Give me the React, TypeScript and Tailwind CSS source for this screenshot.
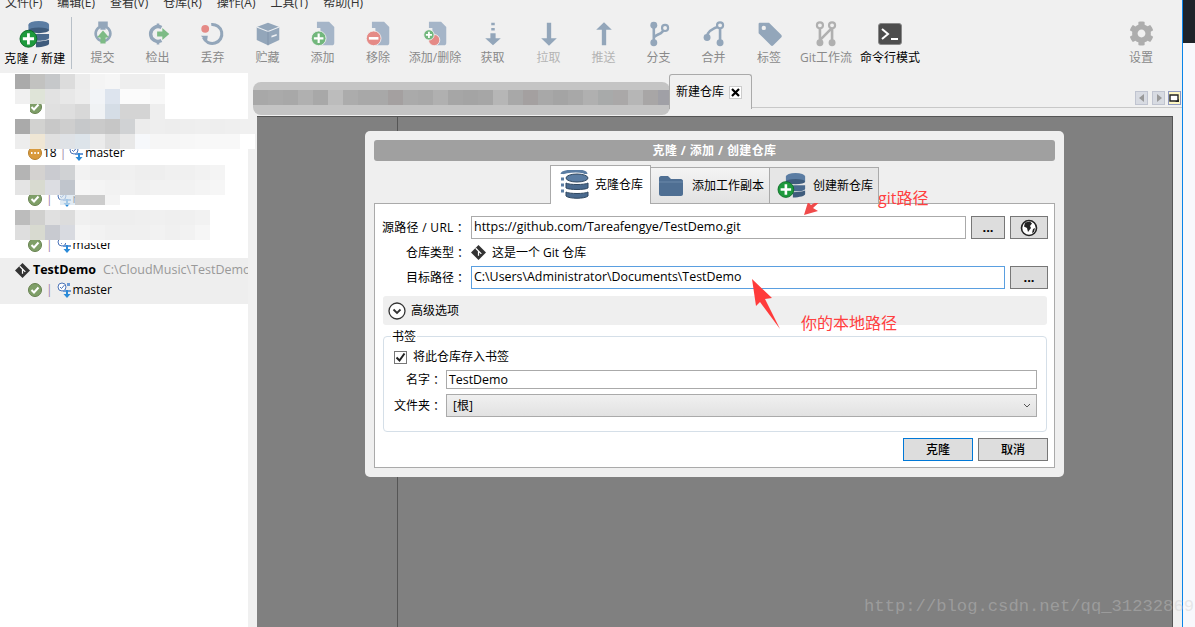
import React from 'react'
import { FaCog } from 'react-icons/fa'

const cjk = { fontFamily: '"Open Sans", "Noto Sans CJK SC", sans-serif' }

const menus = ['文件(F)', '编辑(E)', '查看(V)', '仓库(R)', '操作(A)', '工具(T)', '帮助(H)']

const slate = '#93a6ba'

function Db({ plus, small }: { plus?: boolean; small?: boolean }) {
  return (
    <svg width={small ? 30 : 32} height={small ? 28 : 30} viewBox="0 0 34 32">
      <ellipse cx="21" cy="5" rx="11" ry="4" fill="#5b7da3" />
      <rect x="10" y="5" width="22" height="6" fill="#5b7da3" />
      <ellipse cx="21" cy="11" rx="11" ry="3" fill="#3f5c7c" />
      <path d="M18 15h14v4c0 2-5 3-9 3h-5z" fill="#4a6a8e" />
      <path d="M18 23c5 0 11-1 14-2v4c0 2-6 4-14 4z" fill="#3f5c7c" />
      {plus ? (
        <>
          <circle cx="10" cy="20" r="9" fill="#1d9a3c" stroke="#0c6a26" />
          <path d="M10 14v12M4 20h12" stroke="#fff" strokeWidth="3" />
        </>
      ) : null}
    </svg>
  )
}

function CloneDb() {
  return (
    <svg width="30" height="30" viewBox="0 0 30 30">
      <path d="M2 4c0-2 8-3 14-3s10 1 10 3" fill="none" stroke="#5b7da3" strokeWidth="3" />
      <path d="M1 9h3M1 15h3M1 21h3" stroke="#5b7da3" strokeWidth="3" />
      <ellipse cx="17" cy="8" rx="11" ry="4" fill="#5b7da3" stroke="#2f4760" />
      <path d="M6 13c3 2 19 2 22 0v5c-3 2-19 2-22 0z" fill="#4a6a8e" stroke="#2f4760" />
      <path d="M6 22c3 2 19 2 22 0v4c-3 3-19 3-22 0z" fill="#4a6a8e" stroke="#2f4760" />
    </svg>
  )
}

const iconProps = { width: 26, height: 26, viewBox: '0 0 30 30' }

function CommitIcon() {
  return (
    <svg {...iconProps}>
      <path d="M11 2v5a8.5 8.5 0 1 0 8 0V2h-2.5v6.500h-3V2z" fill="none" stroke={slate} strokeWidth="3" />
      <path d="M15 11l7 8h-4v7h-6v-7H8z" fill="#7dbb85" />
    </svg>
  )
}
function CheckoutIcon() {
  return (
    <svg {...iconProps}>
      <path d="M19 7.500A8.500 8.500 0 1 0 19 22.500" fill="none" stroke={slate} strokeWidth="4" />
      <path d="M15 3v5M15 22v5" stroke={slate} strokeWidth="3" />
      <path d="M14 12h6V8l8 7-8 7v-4h-6z" fill="#7dbb85" />
    </svg>
  )
}
function DiscardIcon() {
  return (
    <svg {...iconProps}>
      <path d="M13 4a11 11 0 1 1-9 15" fill="none" stroke={slate} strokeWidth="3.500" />
      <path d="M1 17l8 0-1 7z" fill={slate} />
      <circle cx="6" cy="9" r="4.500" fill="#e58a86" />
    </svg>
  )
}
function StashIcon() {
  return (
    <svg {...iconProps}>
      <path d="M15 2L28 7v15l-13 6L2 22V7z" fill={slate} />
      <path d="M2 7l13 5 13-5" fill="none" stroke="#eef1f4" strokeWidth="1.200" />
      <path d="M15 12v16" stroke="#7f93a8" />
      <path d="M19 17l6-2v2l-6 2z" fill="#eef1f4" />
    </svg>
  )
}
function DocIcon({ kind }: { kind: 'add' | 'remove' | 'both' }) {
  return (
    <svg {...iconProps}>
      <path d="M8 1h14l6 6v18c0 2-1 3-3 3H12V8H8z" fill="#a5b5c8" />
      {kind === 'add' ? (
        <>
          <circle cx="10" cy="20" r="8.500" fill="#72b77c" stroke="#f0f0f0" />
          <path d="M10 14.500v11M4.500 20h11" stroke="#fff" strokeWidth="2.500" />
        </>
      ) : null}
      {kind === 'remove' ? (
        <>
          <circle cx="10" cy="20" r="8.500" fill="#e58a86" stroke="#f0f0f0" />
          <path d="M4.500 20h11" stroke="#fff" strokeWidth="3" />
        </>
      ) : null}
      {kind === 'both' ? (
        <>
          <circle cx="14" cy="22" r="6.500" fill="#e58a86" stroke="#f0f0f0" />
          <circle cx="8" cy="16" r="6" fill="#72b77c" stroke="#f0f0f0" />
          <path d="M8 12.500v7M4.500 16h7" stroke="#fff" strokeWidth="2" />
        </>
      ) : null}
    </svg>
  )
}
function FetchIcon() {
  return (
    <svg {...iconProps}>
      <path d="M15 2v3M15 8v3" stroke={slate} strokeWidth="4" />
      <path d="M12 14h6v6h6l-9 8-9-8h6z" fill={slate} />
    </svg>
  )
}
function PullIcon() {
  return (
    <svg {...iconProps}>
      <path d="M12.500 2h5v18h6.500l-9 8.500L6 20h6.500z" fill={slate} />
    </svg>
  )
}
function PushIcon() {
  return (
    <svg {...iconProps}>
      <path d="M12.500 28h5V10h6.500L15 1.500 6 10h6.500z" fill={slate} />
    </svg>
  )
}
function BranchIcon() {
  return (
    <svg {...iconProps}>
      <path d="M9 5v19M9 20c0-5 12-4 12-12" fill="none" stroke={slate} strokeWidth="3" />
      <circle cx="9" cy="5" r="4" fill={slate} />
      <circle cx="9" cy="25" r="4" fill={slate} />
      <circle cx="22" cy="8" r="3.500" fill="#f0f0f0" stroke={slate} strokeWidth="2.500" />
    </svg>
  )
}
function MergeIcon() {
  return (
    <svg {...iconProps}>
      <path d="M22 6v18M7 18C7 12 15 8 21 6" fill="none" stroke={slate} strokeWidth="3" />
      <circle cx="22" cy="25" r="4" fill={slate} />
      <circle cx="7" cy="19" r="4" fill={slate} />
      <circle cx="22" cy="5" r="3.500" fill="#f0f0f0" stroke={slate} strokeWidth="2.500" />
    </svg>
  )
}
function TagIcon() {
  return (
    <svg {...iconProps}>
      <path d="M4 2h11l14 14c1 1 1 2 0 3l-9 9c-1 1-2 1-3 0L3 14V3z" fill={slate} />
      <circle cx="9" cy="8" r="2.500" fill="#f0f0f0" />
    </svg>
  )
}
function FlowIcon() {
  const g = '#b0b0b0'
  return (
    <svg {...iconProps}>
      <path d="M8 6v18M22 6v18M8 22L22 8" fill="none" stroke={g} strokeWidth="3" />
      <circle cx="8" cy="5" r="3.500" fill="#f0f0f0" stroke={g} strokeWidth="2.500" />
      <circle cx="22" cy="5" r="3.500" fill="#f0f0f0" stroke={g} strokeWidth="2.500" />
      <circle cx="8" cy="25" r="4" fill={g} />
      <circle cx="22" cy="25" r="4" fill={g} />
    </svg>
  )
}
function TerminalIcon() {
  return (
    <svg width="24" height="22" viewBox="0 0 24 22">
      <rect x="0.500" y="0.500" width="23" height="21" rx="2.500" fill="#4d4d4d" stroke="#888" />
      <path d="M4 6l6 5-6 5" fill="none" stroke="#fff" strokeWidth="2" />
      <path d="M13 16h7" stroke="#fff" strokeWidth="2" />
    </svg>
  )
}

const tools = [
  { label: '提交', w: 'w-[55px]', icon: <CommitIcon />, tone: 'text-[#8a8a8a]' },
  { label: '检出', w: 'w-[55px]', icon: <CheckoutIcon />, tone: 'text-[#8a8a8a]' },
  { label: '丢弃', w: 'w-[55px]', icon: <DiscardIcon />, tone: 'text-[#8a8a8a]' },
  { label: '贮藏', w: 'w-[55px]', icon: <StashIcon />, tone: 'text-[#8a8a8a]' },
  { label: '添加', w: 'w-[55px]', icon: <DocIcon kind="add" />, tone: 'text-[#8a8a8a]' },
  { label: '移除', w: 'w-[56px]', icon: <DocIcon kind="remove" />, tone: 'text-[#8a8a8a]' },
  { label: '添加/删除', w: 'w-[58px]', icon: <DocIcon kind="both" />, tone: 'text-[#8a8a8a]' },
  { label: '获取', w: 'w-[57px]', icon: <FetchIcon />, tone: 'text-[#8a8a8a]' },
  { label: '拉取', w: 'w-[55px]', icon: <PullIcon />, tone: 'text-[#b4b4b4]' },
  { label: '推送', w: 'w-[55px]', icon: <PushIcon />, tone: 'text-[#b4b4b4]' },
  { label: '分支', w: 'w-[55px]', icon: <BranchIcon />, tone: 'text-[#8a8a8a]' },
  { label: '合并', w: 'w-[55px]', icon: <MergeIcon />, tone: 'text-[#8a8a8a]' },
  { label: '标签', w: 'w-[56px]', icon: <TagIcon />, tone: 'text-[#8a8a8a]' },
  { label: 'Git工作流', w: 'w-[58px]', icon: <FlowIcon />, tone: 'text-[#8a8a8a]' },
  { label: '命令行模式', w: 'w-[70px]', icon: <TerminalIcon />, tone: 'text-black' },
]

function Mosaic({ rows, className }: { rows: string[][]; className: string }) {
  return (
    <div className={className}>
      {rows.map((row, i) => (
        <div key={i} className="flex">
          {row.map((c, j) => (
            <div key={j} className="w-[15px] h-[15px]" style={{ backgroundColor: c }} />
          ))}
        </div>
      ))}
    </div>
  )
}

const sideMosaics = [
  {
    className: 'absolute left-[15px] top-[74px]',
    rows: [
      ['#aaaaaa', '#c2c2c0', '#c6c8ca', '#dcdcdc', '#ececec', '#f4f4f4', '#f6f6f6', '#eeeeee', '#eeeeee', '#f0f0f0'],
      ['#f0f0f0', '#dfe4d8', '#e2e2e2', '#e8e8e8', '#ededed', '#f2f4f7', '#dde4ee', '#fbfbfb', '#fbfbfb', '#f8f8f8'],
      ['#ffffff', 'transparent', '#e0e0e0', '#dedede', '#d8d8d8', '#f0f2f4', '#d5dde6', '#d4d4d4', '#d4d4d4', '#eeeeee'],
    ],
  },
  {
    className: 'absolute left-[15px] top-[119px]',
    rows: [
      ['#aaaaaa', '#d2d2d0', '#c8c8c8', '#cecece', '#c6c8ca', '#cacaca', '#c6c6c6', '#d0d2d4', '#ececec', '#eeeeee', '#ededed', '#eeeeee', '#efefef', '#eeeeee', '#efefef', '#f0f0f0'],
      ['#ededed', '#efe6d4', '#e0e0e0', '#dfe2e6', '#dde4ea', '#ebebeb', '#dedede', '#e8e8e8', '#f6f8fb', '#f6f6f6', '#f6f6f6', '#f7f7f7', '#f8f8f8', '#f8f8f8', '#f8f8f8', '#ffffff'],
    ],
  },
  {
    className: 'absolute left-[15px] top-[165px]',
    rows: [
      ['#b4b4b4', '#d4d2d0', '#cacbd0', '#d0d2d4', '#f2f2f2', '#eeeeee', '#eeeeee', '#f0f0f0', '#eeeeee', '#eeeeee', '#f0f0f0', '#f0f0f0', '#f2f2f2', '#f4f4f4'],
      ['#e4e4e4', '#d8dad0', '#dcdde2', '#c0c5cc', '#f6f6f6', '#f4f4f4', '#f2f2f2', '#f2f2f2', '#f0f0f0', '#f2f2f2', '#f2f2f2', '#f2f2f2', '#f4f4f4', '#f6f6f6'],
    ],
  },
  {
    className: 'absolute left-[15px] top-[210px]',
    rows: [
      ['#bcbcbc', '#d0d0ce', '#e0e0e0', '#dcdcdc', '#f0f0f0', '#eeeeee', '#eeeeee', '#eeeeee', '#efefef', '#f0f0f0', '#efefef', '#f0f0f0', '#f2f2f2'],
      ['#dedede', '#d8dad0', '#c8cad0', '#d8dae0', '#f5f5f5', '#f2f2f2', '#f0f0f0', '#f0f0f0', '#f0f0f0', '#f2f2f2', '#f0f0f0', '#f2f2f2', '#f6f6f6'],
    ],
  },
]

const tabMosaic = [
  '#a8a8a8', '#aaaaaa', '#a8a8a8', '#b0b0b0', '#a8a8a8', '#bcbcbc', '#acacac', '#a8a8a8', '#a8a8a8', '#a4a0a0', '#aaaaaa', '#a8a8a8', '#b0b0b0', '#a6a6a6',
  '#a4a4a4', '#a6a6a6', '#b6b6b6', '#a8a8a8', '#a4a0a0', '#a8a8a8', '#a4a4a4', '#a8a8a8', '#b0b0b0', '#a8aaaa', '#aaa8a8', '#b6b6b6', '#a8a6a6', '#a0a0a6',
  '#aaaaae',
]

function CheckBadge() {
  return (
    <svg width="14" height="14" viewBox="0 0 14 14" className="shrink-0">
      <circle cx="7" cy="7" r="6.500" fill="#7f9f68" stroke="#66804f" />
      <path d="M3.500 7l2.500 2.500 4.500-5" fill="none" stroke="#fff" strokeWidth="2" />
    </svg>
  )
}

function PendingBadge() {
  return (
    <svg width="14" height="14" viewBox="0 0 14 14" className="shrink-0">
      <circle cx="7" cy="7" r="6.500" fill="#d99a3c" stroke="#b57f2d" />
      <path d="M3 7h1.500M6.300 7h1.500M9.500 7h1.500" stroke="#fff" strokeWidth="1.800" />
    </svg>
  )
}

function BranchBadge() {
  return (
    <svg width="16" height="16" viewBox="0 0 16 16" className="shrink-0">
      <circle cx="5" cy="5" r="4" fill="#fff" stroke="#4b73b8" />
      <path d="M3 5l1.500 1.500L7.500 3" fill="none" stroke="#4b73b8" />
      <path d="M10 1h3v3h-3zM6 8h8v2H6z" fill="#6b9ad6" />
      <path d="M9 8v4H6.500l3.500 4 3.500-4H11V8z" fill="#2a8ad8" />
    </svg>
  )
}

function GitDiamond({ size }: { size: number }) {
  return (
    <svg width={size} height={size} viewBox="0 0 16 16" className="shrink-0">
      <path d="M8 0l8 8-8 8-8-8z" fill="#333" />
      <path d="M5 3.500l6 6M8 6.500v5" stroke="#fff" strokeWidth="1.300" />
    </svg>
  )
}

const repoRows = [
  { status: <CheckBadge />, gap: 'mx-[4px]' },
  { status: <><PendingBadge /><span className="ml-px">18</span></>, gap: 'mx-[3px]' },
  { status: <CheckBadge />, gap: 'mx-[4px]' },
  { status: <CheckBadge />, gap: 'mx-[4px]' },
]

function Dots({ className }: { className: string }) {
  return (
    <button className={`bg-[#dddddd] border border-[#777777] font-bold text-[13px] leading-none text-black flex items-center justify-center shrink-0 ${className}`}>
      ...
    </button>
  )
}

function Globe() {
  return (
    <svg width="18" height="18" viewBox="0 0 18 18">
      <circle cx="9" cy="9" r="7.500" fill="#fff" stroke="#222" strokeWidth="1.600" />
      <path d="M5 3.500l5-1 2 2-2 2.500 1 2-3 4-1-4-3-1.500zM13 10l2-1-1 4-2 1z" fill="#222" />
    </svg>
  )
}

// fullwidth colon sits centred in the cell in the TC face, as in the original UI font
function Colon() {
  return <span className="font-['Noto_Sans_CJK_TC']">：</span>
}

export default function App() {
  return (
    <div className="relative w-[1195px] h-[627px] overflow-hidden bg-[#f8f8fc] text-xs text-black flex" style={cjk}>
      <div className="w-[1182px] h-full flex flex-col bg-[#f0f0f0]">
        {/* Menu bar, cut off by the top of the shot */}
        <div className="h-[10px] overflow-hidden flex pl-[5px] gap-[15px] text-[#333]">
          {menus.map((m) => (
            <span key={m} className="-mt-[5px] leading-[16px] whitespace-nowrap">{m}</span>
          ))}
        </div>

        {/* Toolbar */}
        <div className="h-[63px] flex">
          <div className="w-[72px] h-[52px] mt-[7px] flex flex-col items-center border-r border-[#b8c0c8] pr-px">
            <div className="h-[30px] mt-[3px]"><Db plus /></div>
            <span className="mt-[1px] leading-[16px] whitespace-nowrap tracking-[0.4px]">克隆 / 新建</span>
          </div>
          <div className="w-[3px]" />
          {tools.map((t) => (
            <div key={t.label} className={`${t.w} flex flex-col items-center`}>
              <div className="h-[30px] mt-[9px] flex items-center justify-center">{t.icon}</div>
              <span className={`mt-[1px] leading-[16px] whitespace-nowrap ${t.tone}`}>{t.label}</span>
            </div>
          ))}
          <div className="ml-auto mr-[27px] w-[28px] flex flex-col items-center text-[#8a8a8a]">
            <FaCog className="mt-[11px] text-[25px] text-[#adadad]" />
            <span className="mt-[4px] leading-[16px] whitespace-nowrap">设置</span>
          </div>
        </div>

        <div className="flex-1 flex min-h-0">
          {/* Repo list */}
          <div className="w-[248px] bg-white pt-[1px] shrink-0">
            {repoRows.map((r, i) => (
              <div key={i} className="h-[46px] flex flex-col pl-[28px] pt-[25px]">
                <div className="flex items-center h-[16px] leading-[16px]">
                  {r.status}
                  <span className={`${r.gap} text-[#a080a8]`}>|</span>
                  <BranchBadge />
                  <span>master</span>
                </div>
              </div>
            ))}
            <div className="h-[46px] bg-[#eeeeee] pl-[15px] pt-[4px] overflow-hidden">
              <div className="flex items-center h-[16px] whitespace-nowrap">
                <GitDiamond size={15} />
                <span className="ml-[3px] font-bold text-[12.5px]">TestDemo</span>
                <span className="ml-[7px] text-[#999999] text-[12.5px]">C:\CloudMusic\TestDemo</span>
              </div>
              <div className="flex items-center h-[16px] mt-[4px] pl-[13px]">
                <CheckBadge />
                <span className="mx-[4px] text-[#a080a8]">|</span>
                <BranchBadge />
                <span>master</span>
              </div>
            </div>
          </div>

          {/* Tabs and page */}
          <div className="flex-1 flex flex-col pl-[9px] min-w-0">
            <div className="h-[43px] flex shrink-0 relative">
              <div className="w-[412px]" />
              <div className="w-[83px] h-[35px] mt-px bg-[#f0f0f0] border border-b-0 border-[#aaaaaa] rounded-t-[3px] flex items-center pl-[6px] gap-[5px] z-10">
                <span className="whitespace-nowrap">新建仓库</span>
                <span className="w-[13px] h-[13px] bg-white border border-[#cccccc] flex items-center justify-center">
                  <svg width="9" height="9" viewBox="0 0 9 9"><path d="M1 1l7 7M8 1L1 8" stroke="#000" strokeWidth="2.200" /></svg>
                </span>
              </div>
              <div className="flex-1 h-[35px] border-b border-[#c8c8c8] flex items-end justify-end gap-[3px] pb-[2px] pr-[1px]">
                <span className="w-[13px] h-[14px] bg-[#d8dbe2] border border-[#c0c4d0] flex items-center justify-center mr-[1px]">
                  <svg width="6" height="8" viewBox="0 0 6 8"><path d="M5 0v8L0 4z" fill="#999" /></svg>
                </span>
                <span className="w-[13px] h-[14px] bg-[#d8dbe2] border border-[#c0c4d0] flex items-center justify-center">
                  <svg width="6" height="8" viewBox="0 0 6 8"><path d="M1 0v8l5-4z" fill="#999" /></svg>
                </span>
                <span className="w-[13px] h-[14px] bg-[#fdf6c4] border border-[#8f99c0] flex items-center justify-center">
                  <svg width="11" height="10" viewBox="0 0 11 10"><path d="M1 2h8v6H1z" fill="#fff" stroke="#222" strokeWidth="1.400" /><path d="M6 9l4-3v3z" fill="#222" /></svg>
                </span>
              </div>
            </div>
            <div className="flex-1 flex bg-[#808080] border-t border-[#555555] border-r mr-[9px]">
              <div className="w-[141px] border-r border-[#555555]" />
            </div>
          </div>
        </div>
      </div>

      {/* Right edge of the desktop behind the window */}
      <div className="w-px bg-[#0a84e8]" />
      <div className="flex-1"><div className="h-[43px] bg-[#1f2329]" /></div>

      {/* Blurred-out repo names and tabs */}
      {sideMosaics.map((m, i) => (
        <Mosaic key={i} className={m.className} rows={m.rows} />
      ))}
      <div className="absolute left-[60px] top-[195px] w-[60px] h-[10px] flex">
        <div className="w-[15px] bg-[#d4e2ee]/70" />
        <div className="w-[30px] bg-[#cccccc]" />
        <div className="w-[15px] bg-[#f4f4f4]" />
      </div>
      <div className="absolute left-[60px] top-[240px] w-[60px] h-[3px] bg-white" />
      <div className="absolute left-[253px] top-[82px] w-[417px] h-[33px] rounded-[8px] overflow-hidden bg-[#c4c4c4] pt-[8px]">
        <div className="flex">
          {tabMosaic.map((c, i) => (
            <div key={i} className="w-[15px] h-[15px] shrink-0" style={{ backgroundColor: c }} />
          ))}
        </div>
      </div>

      {/* Clone dialog */}
      <div className="absolute left-[365px] top-[131px] w-[699px] h-[346px] bg-[#efefef] rounded-[5px] p-[9px] flex flex-col">
        <div className="h-[21px] bg-[#a0a0a0] rounded-[3px] flex items-center justify-center text-white font-bold tracking-[0.4px] shrink-0">
          克隆 / 添加 / 创建仓库
        </div>
        <div className="h-[38px] mt-[5px] flex items-end pl-[176px] shrink-0 relative z-10 -mb-px">
          <div className="w-[101px] h-[39px] bg-white border border-b-0 border-[#aaaaaa] flex items-center pl-[9px] gap-[5px]">
            <CloneDb />
            <span className="whitespace-nowrap">克隆仓库</span>
          </div>
          <div className="w-[119px] h-[36px] bg-gradient-to-b from-[#f4f4f4] to-[#e2e2e2] border-r border-t border-[#aaaaaa] mb-px flex items-center pl-[8px] gap-[9px]">
            <svg width="24" height="20" viewBox="0 0 24 20"><path d="M0 2c0-1 1-2 2-2h7l3 3h10c1 0 2 1 2 2v13c0 1-1 2-2 2H2c-1 0-2-1-2-2z" fill="#4f6f93" /><path d="M0 6h24" stroke="#6d8aaa" /></svg>
            <span className="whitespace-nowrap">添加工作副本</span>
          </div>
          <div className="w-[109px] h-[36px] bg-[#e6e6e6] border-r border-t border-[#aaaaaa] mb-px flex items-center pl-[7px] gap-[6px]">
            <div className="w-[30px] h-[30px] flex items-center justify-center"><Db plus small /></div>
            <span className="whitespace-nowrap">创建新仓库</span>
          </div>
        </div>

        <div className="flex-1 bg-white border border-[#aaaaaa] pl-[8px] pr-[6px] pt-[12px] min-h-0">
          <div className="flex h-[23px] items-center">
            <span className="w-[88px] shrink-0 pr-[5px] flex justify-end whitespace-nowrap tracking-[0.3px]">源路径 / URL<Colon /></span>
            <div className="w-[495px] shrink-0 h-[23px] border border-[#aaaaaa] pl-[2px] leading-[19px] whitespace-nowrap text-[12.5px]">https://github.com/Tareafengye/TestDemo.git</div>
            <Dots className="w-[34px] h-[23px] ml-[5px]" />
            <button className="w-[38px] h-[23px] ml-[5px] bg-[#dddddd] border border-[#777777] flex items-center justify-center shrink-0">
              <Globe />
            </button>
          </div>
          <div className="flex h-[27px] items-center">
            <span className="w-[88px] shrink-0 pr-[5px] flex justify-end whitespace-nowrap">仓库类型<Colon /></span>
            <GitDiamond size={15} />
            <span className="ml-[6px] whitespace-nowrap">这是一个 Git 仓库</span>
          </div>
          <div className="flex h-[23px] items-center">
            <span className="w-[88px] shrink-0 pr-[5px] flex justify-end whitespace-nowrap">目标路径<Colon /></span>
            <div className="w-[534px] shrink-0 h-[23px] border border-[#5a9fe0] pl-[2px] leading-[19px] whitespace-nowrap text-[12.4px]">C:\Users\Administrator\Documents\TestDemo</div>
            <Dots className="w-[38px] h-[23px] ml-[5px]" />
          </div>
          <div className="mt-[7px] h-[29px] w-[664px] bg-[#efefef] rounded-[3px] flex items-center pl-[5px] gap-[5px]">
            <svg width="18" height="18" viewBox="0 0 18 18"><circle cx="9" cy="9" r="8" fill="#fff" stroke="#333" strokeWidth="1.300" /><path d="M5.500 7.500L9 11l3.500-3.500" fill="none" stroke="#333" strokeWidth="1.800" /></svg>
            <span>高级选项</span>
          </div>
          <div className="relative mt-[11px] h-[96px] w-[664px] border border-[#d5dfe8] rounded-[4px] pt-[13px] pl-[10px] pr-[9px]">
            <span className="absolute left-[7px] -top-[8px] bg-white px-px leading-[16px]">书签</span>
            <div className="flex items-center h-[14px] gap-[6px]">
              <span className="w-[13px] h-[13px] border border-[#777777] flex items-center justify-center shrink-0">
                <svg width="11" height="11" viewBox="0 0 11 11"><path d="M1.500 5.500l3 3 5-7" fill="none" stroke="#222" strokeWidth="2" /></svg>
              </span>
              <span>将此仓库存入书签</span>
            </div>
            <div className="flex items-center h-[19px] mt-[6px]">
              <span className="w-[52px] shrink-0 pr-[4px] flex justify-end whitespace-nowrap">名字<Colon /></span>
              <div className="w-[591px] shrink-0 h-[19px] border border-[#aaaaaa] pl-[2px] leading-[17px] text-[12.4px]">TestDemo</div>
            </div>
            <div className="flex items-center h-[23px] mt-[5px]">
              <span className="w-[52px] shrink-0 pr-[4px] flex justify-end whitespace-nowrap">文件夹<Colon /></span>
              <div className="w-[591px] shrink-0 h-[23px] border border-[#aaaaaa] bg-gradient-to-b from-[#f0f0f0] to-[#e2e2e2] pl-[6px] flex items-center justify-between pr-[5px]">
                <span>[根]</span>
                <svg width="8" height="5" viewBox="0 0 8 5"><path d="M1 1l3 3 3-3" fill="none" stroke="#555" /></svg>
              </div>
            </div>
          </div>
          <div className="flex justify-end gap-[5px] mt-[6px] w-[665px] font-medium">
            <button className="w-[70px] h-[23px] bg-[#dddddd] border border-[#0078d7]">克隆</button>
            <button className="w-[70px] h-[23px] bg-[#dddddd] border border-[#777777]">取消</button>
          </div>
        </div>
      </div>

      {/* Red annotations drawn on the screenshot */}
      <svg className="absolute left-[745px] top-[190px]" width="90" height="145" viewBox="745 190 90 145">
        <path d="M826 196L813 208L818 211L804 215L808 202L811 205Z" fill="#f04a4a" />
        <path d="M752 279L772 298L765 299L780 329L760 302L756 306Z" fill="#ff3b3b" />
      </svg>
      <span className="absolute left-[878px] top-[187px] text-[16px] leading-[22px] text-[#ff4040]">git路径</span>
      <span className="absolute left-[801px] top-[312px] text-[16px] leading-[22px] text-[#ff4040]">你的本地路径</span>

      {/* Blog watermark */}
      <span className="absolute left-[864px] top-[596px] text-[17.2px] leading-[22px] whitespace-nowrap text-[#c8c8c8]/40" style={{ fontFamily: '"Liberation Mono", monospace' }}>
        http://blog.csdn.net/qq_31232869
      </span>
    </div>
  )
}
